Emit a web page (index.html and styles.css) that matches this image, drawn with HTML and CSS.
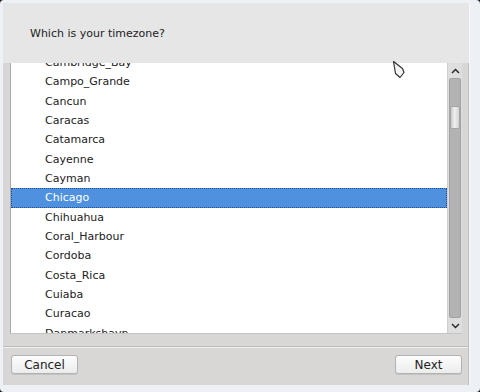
FILE: index.html
```html
<!DOCTYPE html>
<html>
    <head>
        <meta charset="utf-8">
        <title>Timezone</title>
        <link rel="stylesheet" href="styles.css">
    </head>
    <body>
        <div class="window">
            <div class="client">
                <div class="header">
                    <h1 class="header-title">Which is your timezone?</h1>
                </div>
                <div class="panel">
                    <div class="listbox">
                        <div class="list-view">
                            <ul class="zone-list">
                                <li>Cambridge_Bay</li>
                                <li>Campo_Grande</li>
                                <li>Cancun</li>
                                <li>Caracas</li>
                                <li>Catamarca</li>
                                <li>Cayenne</li>
                                <li>Cayman</li>
                                <li class="is-selected">Chicago</li>
                                <li>Chihuahua</li>
                                <li>Coral_Harbour</li>
                                <li>Cordoba</li>
                                <li>Costa_Rica</li>
                                <li>Cuiaba</li>
                                <li>Curacao</li>
                                <li>Danmarkshavn</li>
                            </ul>
                        </div>
                        <div class="scrollbar">
                            <div class="scrollbar-arrow">
                                <svg width="9" height="6" viewBox="0 0 9 6"><path d="M1 5 L4.5 1.5 L8 5" fill="none" stroke="#222" stroke-width="1.4"/></svg>
                            </div>
                            <div class="scrollbar-trough">
                                <div class="scrollbar-thumb"></div>
                            </div>
                            <div class="scrollbar-arrow">
                                <svg width="9" height="6" viewBox="0 0 9 6"><path d="M1 1 L4.5 4.5 L8 1" fill="none" stroke="#222" stroke-width="1.4"/></svg>
                            </div>
                        </div>
                    </div>
                    <div class="separator"></div>
                    <div class="buttons">
                        <button class="btn">Cancel</button>
                        <button class="btn">Next</button>
                    </div>
                </div>
            </div>
            <svg class="pointer" width="14" height="20" viewBox="0 0 14 20">
                <path d="M1.5 1.5 L10.5 8.5 L12 12.5 L8 17.5 L3.5 13.5 Z" fill="#f4f4f4" stroke="#333" stroke-width="1.2" stroke-linejoin="round"/>
            </svg>
        </div>
    </body>
</html>
```

FILE: styles.css
```css
/* Overall */

* {
    box-sizing: border-box;
}

html, body {
    padding: 0;
    margin: 0;
}

body {
    background: #1a1a1a;
    font-family: 'DejaVu Sans', 'Liberation Sans', sans-serif;
    font-size: 11px;
    color: #222;
}

/* Window frame */

.window {
    position: relative;
    width: 480px;
    height: 392px;
    padding: 3px 10px 7px 3px;
    background: #edf1f5;
    border-radius: 4px;
}

.client {
    display: flex;
    flex-direction: column;
    height: 100%;
    border-right: 1px solid #f8f8f8;
}

/* Header */

.header {
    height: 60px;
    padding: 24px 0 0 27px;
    background: #e6e6e6;
}

.header-title {
    margin: 0;
    font-size: 11px;
    font-weight: 400;
    line-height: 13px;
}

/* Panel */

.panel {
    flex: 1;
    padding: 0 6px 0 7px;
    background: #d8d7d5;
    border-right: 1px solid #bdbdbd;
}

.listbox {
    display: flex;
    height: 271px;
    border-left: 1px solid #a9a9a9;
    border-bottom: 1px solid #c4c4c4;
}

.list-view {
    flex: 1;
    overflow: hidden;
    background: #fff;
}

.zone-list {
    list-style: none;
    margin: -10px 0 0;
    padding: 0;
}

.zone-list li {
    height: 19.33px;
    line-height: 19.33px;
    padding-left: 34px;
}

.zone-list li.is-selected {
    color: #fff;
    background: #4f91de;
    outline: 1px dotted #1f4f8f;
    outline-offset: -1px;
}

/* Scrollbar */

.scrollbar {
    display: flex;
    flex-direction: column;
    width: 15px;
    background: #dedede;
    border-left: 1px solid #cfcfcf;
}

.scrollbar-arrow {
    display: flex;
    align-items: center;
    justify-content: center;
    height: 15px;
}

.scrollbar-trough {
    flex: 1;
    margin: 0 1px;
    padding-top: 27px;
    background: #b3b3b3;
    border: 1px solid #a2a2a2;
    border-radius: 2px;
}

.scrollbar-thumb {
    height: 23px;
    background: linear-gradient(to right, #c9c9c9, #eeeeee 45%, #d4d4d4);
    border: 1px solid #a6a6a6;
    border-radius: 2px;
}

/* Bottom */

.separator {
    height: 2px;
    margin: 12px -6px 0 -7px;
    border-top: 1px solid #bcbcbc;
    border-bottom: 1px solid #efefef;
}

.buttons {
    display: flex;
    justify-content: space-between;
    padding: 7px 0 0 1px;
}

.btn {
    width: 67px;
    height: 19px;
    padding: 0;
    font-family: 'DejaVu Sans', 'Liberation Sans', sans-serif;
    font-size: 12px;
    color: #222;
    background: linear-gradient(#fdfdfd, #ececec);
    border: 1px solid #b2b2b2;
    border-radius: 3px;
    box-shadow: 0 1px 0 #c4c4c4;
}

/* Mouse pointer over the list */

.pointer {
    position: absolute;
    left: 392px;
    top: 60px;
}
```
